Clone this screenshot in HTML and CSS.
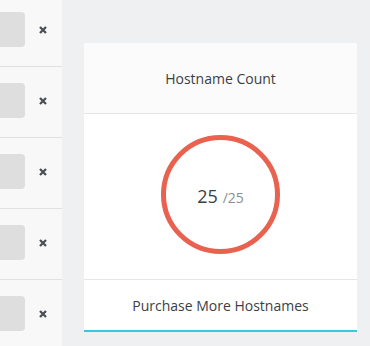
FILE: index.html
```html
<!DOCTYPE html>
<html>
<head>
<meta charset="utf-8">
<link rel="stylesheet" href="styles.css">
</head>
<body>
<div class="page">
  <div class="list">
    <div class="row"><div class="thumb"></div><svg class="close" viewBox="0 0 8 8" width="8" height="8"><path d="M1 1 L7 7 M7 1 L1 7"/></svg></div>
    <div class="row"><div class="thumb"></div><svg class="close" viewBox="0 0 8 8" width="8" height="8"><path d="M1 1 L7 7 M7 1 L1 7"/></svg></div>
    <div class="row"><div class="thumb"></div><svg class="close" viewBox="0 0 8 8" width="8" height="8"><path d="M1 1 L7 7 M7 1 L1 7"/></svg></div>
    <div class="row"><div class="thumb"></div><svg class="close" viewBox="0 0 8 8" width="8" height="8"><path d="M1 1 L7 7 M7 1 L1 7"/></svg></div>
    <div class="row"><div class="thumb"></div><svg class="close" viewBox="0 0 8 8" width="8" height="8"><path d="M1 1 L7 7 M7 1 L1 7"/></svg></div>
  </div>
  <div class="main">
    <div class="card">
      <div class="card-header">Hostname Count</div>
      <div class="card-body">
        <div class="ring"><span class="count">25</span><span class="total">/25</span></div>
      </div>
      <div class="card-footer">Purchase More Hostnames</div>
    </div>
  </div>
</div>
</body>
</html>
```
FILE: styles.css
```css
html, body {
  margin: 0;
  padding: 0;
  background: #eff0f2;
  font-family: "Open Sans", sans-serif;
  color: #3a3f45;
}
.page {
  display: flex;
  height: 346px;
  overflow: hidden;
}
.list {
  width: 62px;
  flex: none;
  background: #f8f8f8;
  margin-top: -4px;
}
.row {
  height: 70px;
  border-bottom: 1px solid #e1e1e1;
  display: flex;
  align-items: flex-start;
}
.thumb {
  width: 40px;
  height: 35px;
  margin-left: -15px;
  margin-top: 16px;
  background: #dedede;
  border-radius: 4px;
  flex: none;
}
.close {
  margin-left: 14px;
  margin-top: 30px;
  stroke: #4a4f55;
  stroke-width: 2.3;
  fill: none;
}
.main {
  flex: 1;
  padding: 43px 13px 0 22px;
}
.card {
  width: 273px;
  background: #fff;
  border-bottom: 2px solid #3ec6dc;
}
.card-header {
  height: 70px;
  background: #fbfbfb;
  border-bottom: 1px solid #e6e6e6;
  display: flex;
  align-items: center;
  justify-content: center;
  font-size: 14px;
}
.card-body {
  height: 165px;
  display: flex;
  justify-content: center;
  padding-top: 21px;
  box-sizing: border-box;
}
.ring {
  width: 119px;
  height: 119px;
  box-sizing: border-box;
  border: 5px solid #e8624f;
  border-radius: 50%;
  display: flex;
  align-items: baseline;
  justify-content: center;
  padding-top: 44px;
}
.count {
  font-size: 18px;
  color: #3a3f45;
}
.total {
  font-size: 14px;
  color: #8a8d91;
  margin-left: 5px;
}
.card-footer {
  height: 50px;
  border-top: 1px solid #e6e6e6;
  display: flex;
  align-items: center;
  justify-content: center;
  font-size: 14px;
}
```
